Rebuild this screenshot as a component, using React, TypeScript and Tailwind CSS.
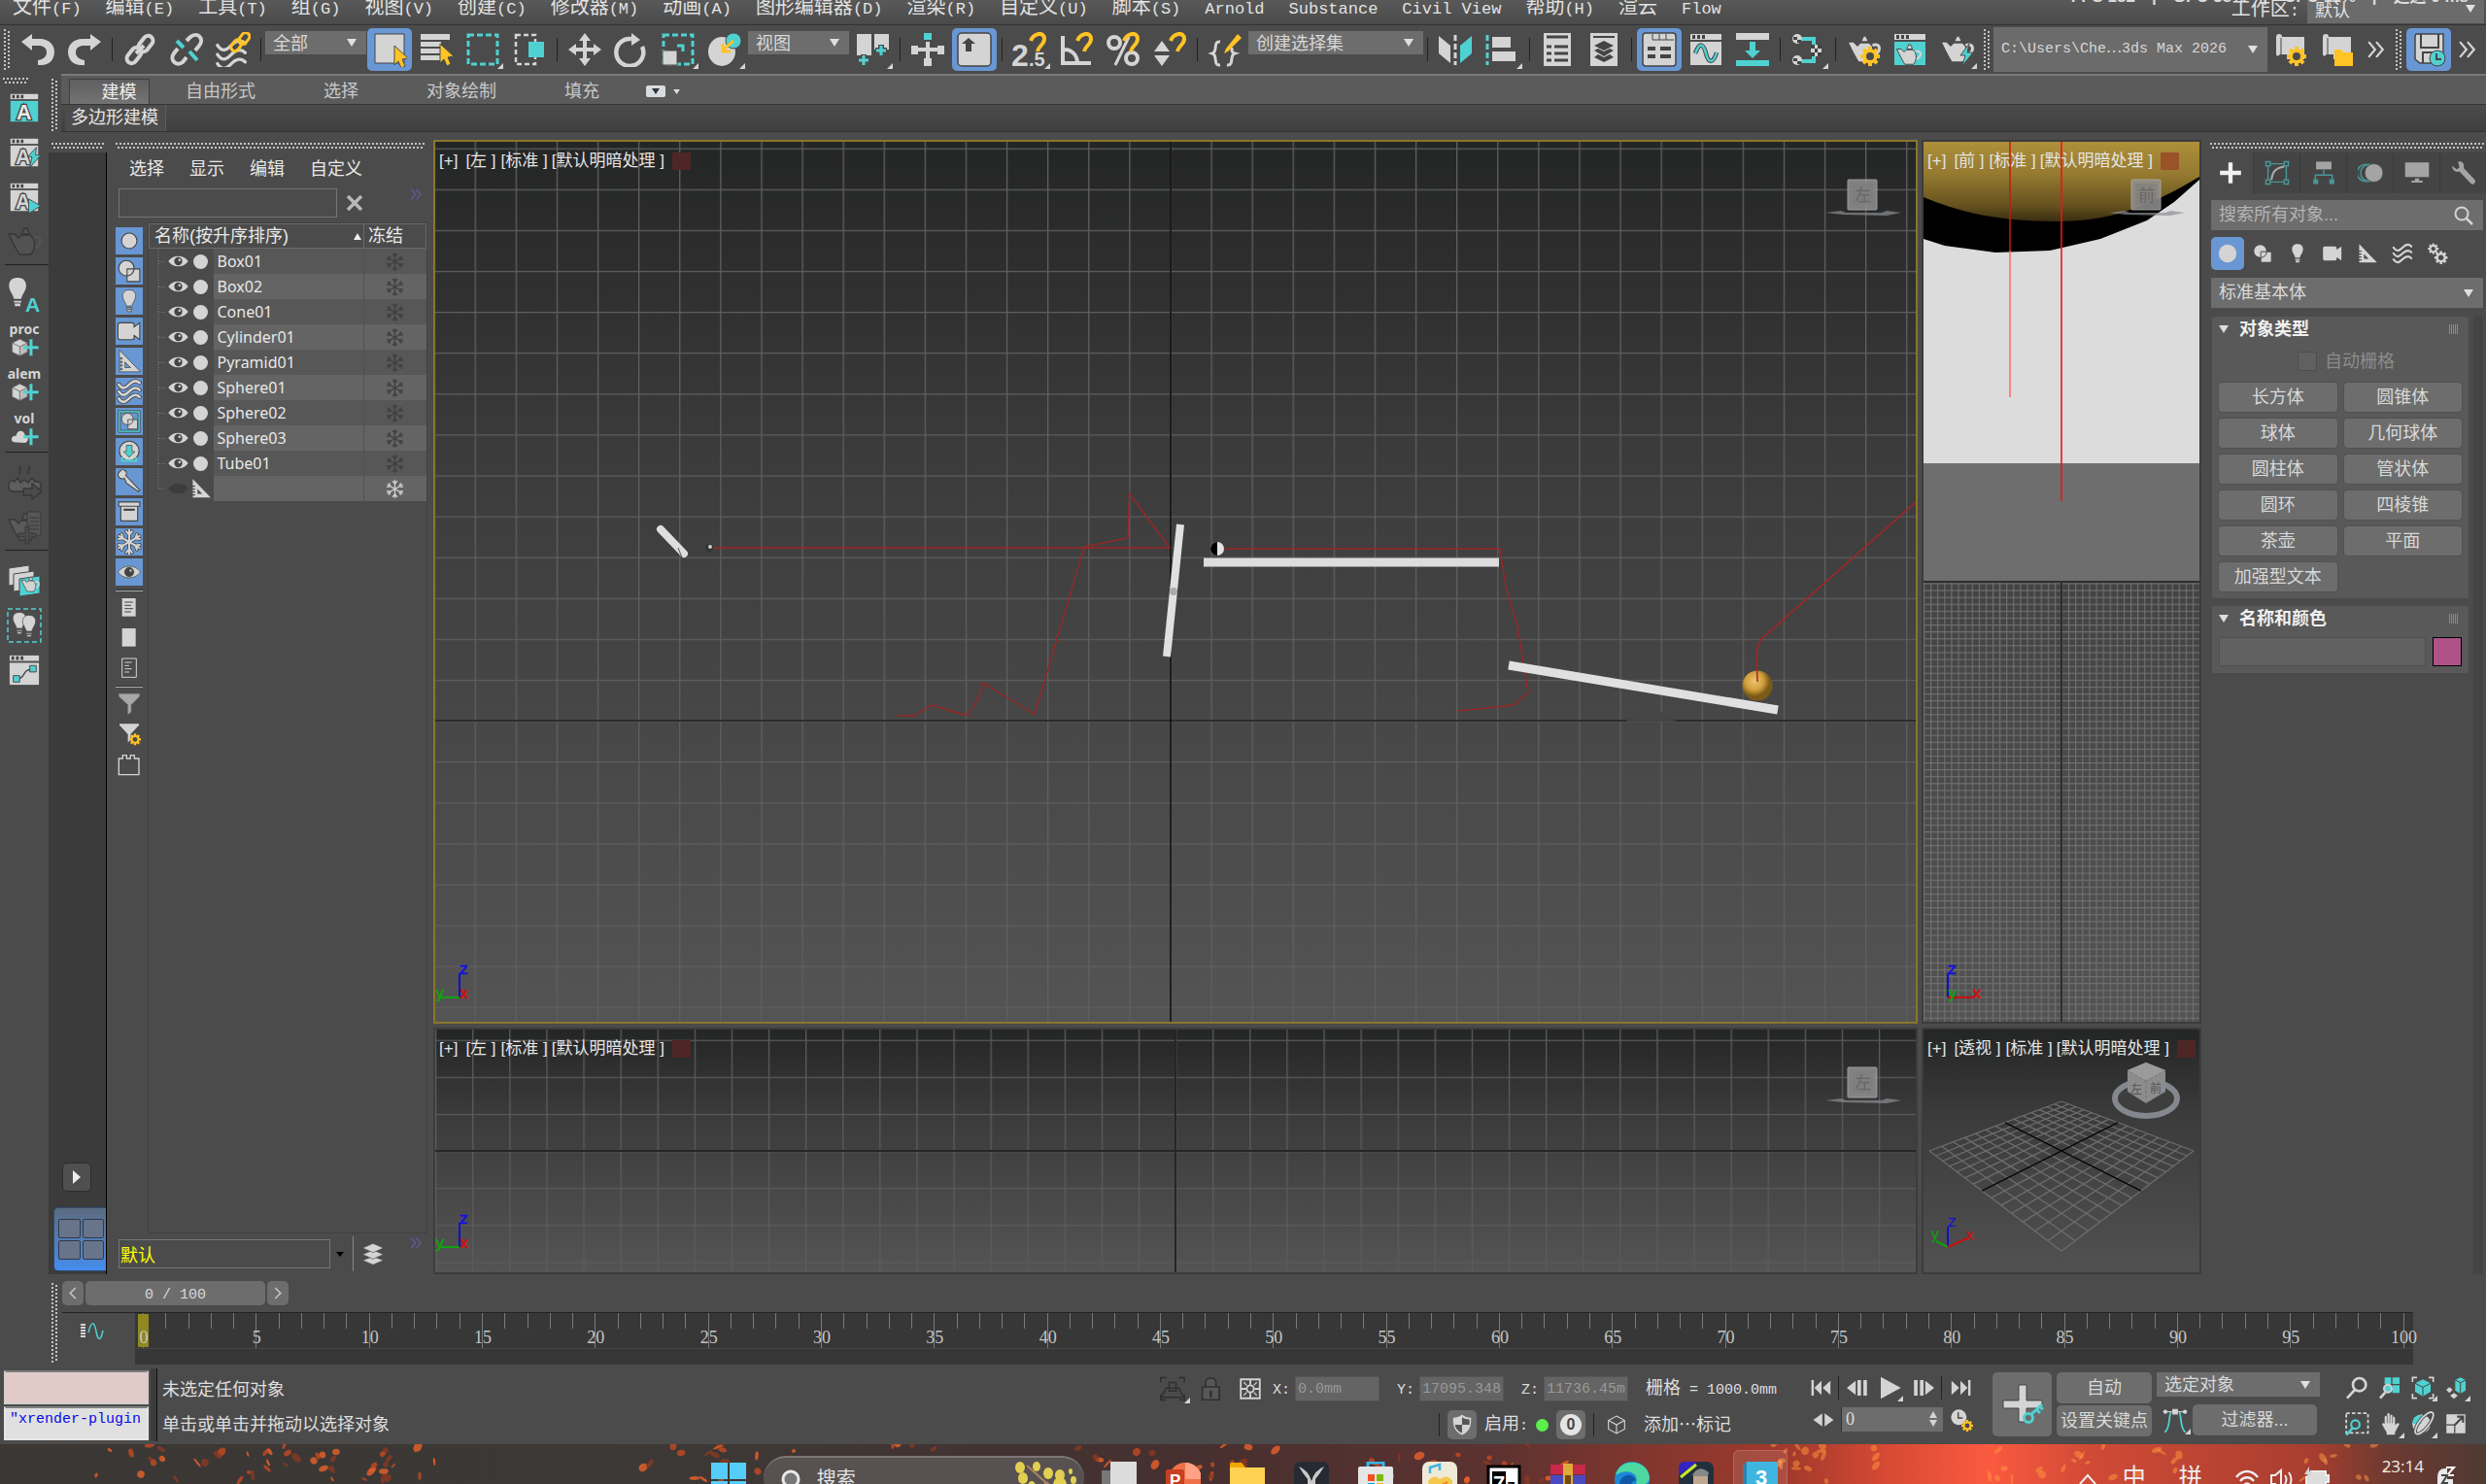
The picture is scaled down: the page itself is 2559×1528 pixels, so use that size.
import React, { useState } from "react";
import clsx from "clsx";

const L = "#d4d4d4";
const C = "#50d1d1";
const Y = "#ffc325";
const D = "#444444";

const MENUS = ["文件(F)", "编辑(E)", "工具(T)", "组(G)", "视图(V)", "创建(C)", "修改器(M)", "动画(A)", "图形编辑器(D)", "渲染(R)", "自定义(U)", "脚本(S)", "Arnold", "Substance", "Civil View", "帮助(H)", "渲云", "Flow"];
const OBJECTS = ["Box01", "Box02", "Cone01", "Cylinder01", "Pyramid01", "Sphere01", "Sphere02", "Sphere03", "Tube01"];
const PRIMITIVES = ["长方体", "圆锥体", "球体", "几何球体", "圆柱体", "管状体", "圆环", "四棱锥", "茶壶", "平面", "加强型文本"];

// Chinese at full size, latin in a half-width mono so that columns stay even
function Txt({ children, big }: { children: string; big?: boolean }) {
  const parts = children.split(/([\x20-\x7e]+)/).filter(Boolean);
  return (
    <span className={clsx("whitespace-pre", big ? "text-[20px]" : "text-[18px]")}>
      {parts.map((p, i) =>
        /^[\x20-\x7e]+$/.test(p) ? (
          <span key={i} className={clsx("font-['Liberation_Mono',monospace]", big ? "text-[17px]" : "text-[15px]")}>{p}</span>
        ) : (
          <React.Fragment key={i}>{p}</React.Fragment>
        )
      )}
    </span>
  );
}

type SvgProps = { children: React.ReactNode; className?: string; box?: string };
const Ico = ({ children, className = "h-9 w-9", box = "0 0 36 36" }: SvgProps) => (
  <svg viewBox={box} className={clsx("shrink-0", className)} fill={L} aria-hidden="true">{children}</svg>
);

const GripH = ({ className }: { className?: string }) => (
  <div className={clsx("flex flex-col gap-[2px]", className)}>
    <div className="h-[2px] bg-[repeating-linear-gradient(90deg,#c4c4c4_0_2px,transparent_2px_4px)]" />
    <div className="ml-[2px] h-[2px] bg-[repeating-linear-gradient(90deg,#c4c4c4_0_2px,transparent_2px_4px)]" />
  </div>
);
const GripV = ({ className }: { className?: string }) => (
  <div className={clsx("flex gap-[2px]", className)}>
    <div className="w-[2px] bg-[repeating-linear-gradient(180deg,#c4c4c4_0_2px,transparent_2px_4px)]" />
    <div className="mt-[2px] w-[2px] bg-[repeating-linear-gradient(180deg,#c4c4c4_0_2px,transparent_2px_4px)]" />
  </div>
);

const Sep = () => <div className="flex w-[9px] shrink-0 justify-center"><div className="h-6 w-px bg-[#222]" /></div>;

const Fly = () => (
  <svg viewBox="0 0 6 6" className="absolute right-[2px] bottom-[2px] h-[6px] w-[6px]"><path d="M6 0V6H0z" fill={L} /></svg>
);

function Tool({ label, on, fly, children }: { label: string; on?: boolean; fly?: boolean; children: React.ReactNode }) {
  return (
    <button aria-label={label} className={clsx("relative mx-px flex h-11 w-[46px] shrink-0 items-center justify-center rounded-[5px]", on && "bg-[#6897d3]")}>
      {children}
      {fly && <Fly />}
    </button>
  );
}

function Combo({ label, value, className }: { label: string; value: string; className?: string }) {
  return (
    <div className={clsx("relative shrink-0 bg-[#6d6d6d] text-[#d8d8d8]", className)}>
      <select aria-label={label} className="h-full w-full appearance-none bg-transparent pl-2 text-[18px] outline-none">
        <option>{value}</option>
      </select>
      <svg viewBox="0 0 10 8" className="pointer-events-none absolute top-1/2 right-[10px] h-2 w-[10px] -translate-y-1/2"><path d="M0 0H10L5 8z" fill="#e0e0e0" /></svg>
    </div>
  );
}

/* ---- drawings shared by several bars ---- */

const Cursor = ({ x = 20, y = 13 }) => <path d="M0 0L14 13L8 14L11 21L7 23L4 16L0 20z" transform={`translate(${x} ${y})`} fill={Y} stroke="#4b4b4b" strokeWidth="1" />;
const Magnet = () => <path d="M19 9C22 1 33 -1 33 7C33 13 27 14 26 20" fill="none" stroke={Y} strokeWidth="4" />;
const Pot = ({ fill = L, edge = D }) => (
  <g fill={fill} stroke={edge} strokeWidth="1.3">
    <path d="M27 14C37 9 37 23 27 24" fill="none" stroke={fill} strokeWidth="3" />
    <path d="M2 10L8 10L12 14L15 11H24L27 14C30 21 28 27 25 31H13C10 26 6 19 2 10z" />
    <path d="M16 10C16 6 18 7 18 4H21C21 7 23 6 23 10z" />
  </g>
);
const Gear = ({ x, y, s = 1, fill = Y, hole = "#4b4b4b" }: { x: number; y: number; s?: number; fill?: string; hole?: string }) => (
  <g transform={`translate(${x} ${y}) scale(${s})`}>
    {[0, 45, 90, 135].map((a) => <rect key={a} x="-2" y="-10" width="4" height="20" fill={fill} transform={`rotate(${a})`} />)}
    <circle r="7.5" fill={fill} />
    <circle r="4" fill={hole} />
  </g>
);
const Win = ({ body = L }) => (
  <>
    <path d="M2 2H34V8H2z" />
    <path d="M4 3H7V7H4zM9 3H12V7H9zM14 3H17V7H14z" fill={D} />
    <path d="M2 10H34V34H2z" fill={body} />
  </>
);
const Bulb = ({ edge = "none" }) => (
  <g stroke={edge}>
    <path d="M18 2C10 2 8 8 9 13C10 18 13 20 14 25H22C23 20 26 18 27 13C28 8 26 2 18 2z" />
    <path d="M14 27H22V29H14zM15 30H21V33H15z" />
  </g>
);
const Ruler = ({ edge = "none" }) => <path fillRule="evenodd" stroke={edge} d="M4 2L34 33H4V30H8V28H4V25H8V23H4V20H8V18H4V15H8V13H4zM12 19V27H20z" />;
const Waves = ({ edge = "none" }) => (
  <g fill="none" strokeLinecap="round">
    {[8, 18, 28].map((y) => (
      <g key={y}>
        <path d={`M3 ${y}C9 ${y + 9} 14 ${y + 4} 18 ${y}S28 ${y - 7} 33 ${y - 2}`} stroke={edge} strokeWidth="6" />
        <path d={`M3 ${y}C9 ${y + 9} 14 ${y + 4} 18 ${y}S28 ${y - 7} 33 ${y - 2}`} stroke={L} strokeWidth="3.5" />
      </g>
    ))}
  </g>
);
const Shapes = () => (
  <g stroke={D} strokeWidth="1.5"><circle cx="14" cy="14" r="11" /><path d="M15 15H33V33H15z" /><path d="M25 15A11 11 0 0 1 15 25" fill="none" /></g>
);
const Camera = ({ edge = "none" }) => <path stroke={edge} strokeWidth="1.5" d="M5 6H22Q25 6 25 9V12L33 6V30L25 24V27Q25 30 22 30H5Q2 30 2 27V9Q2 6 5 6z" />;
const Eye = ({ fill = L }) => (
  <><path d="M2 18C9 7 27 7 34 18C27 29 9 29 2 18z" fill={fill} /><circle cx="18" cy="18" r="6.5" fill={fill === L ? D : fill} /><circle cx="20" cy="16" r="2" fill={fill} /></>
);
const Snow = ({ color = L, width = 2.4 }) => (
  <g fill="none" stroke={color} strokeWidth={width} strokeLinecap="round">
    {[0, 60, 120, 180, 240, 300].map((a) => <path key={a} d="M18 18V1M14 3L18 8L22 3" transform={`rotate(${a} 18 18)`} />)}
  </g>
);
const Chain = () => (
  <g fill="none" stroke={L} strokeWidth="4">
    <rect x="-5" y="-9" width="10" height="18" rx="5" transform="translate(12 24) rotate(38)" />
    <rect x="-5" y="-9" width="10" height="18" rx="5" transform="translate(24 12) rotate(38)" />
    <path d="M14 22L22 14" />
  </g>
);
const Stack = ({ fill = L }) => (
  <g fill={fill} stroke="#4b4b4b" strokeWidth="1"><path d="M18 22L34 28L18 35L2 28z" /><path d="M18 12L34 19L18 26L2 19z" /><path d="M18 2L34 9L18 16L2 9z" /></g>
);
const Boxy = () => (
  <g stroke="#777" strokeWidth="1"><path d="M2 13L12 8L22 13L12 18z" /><path d="M2 13L12 18V30L2 25z" /><path d="M22 13L12 18V30L22 25z" fill="#bdbdbd" /></g>
);
const Chevrons = ({ color = L, className = "h-4 w-4" }) => (
  <Ico box="0 0 16 16" className={className}><path d="M1 1L7 8L1 15M8 1L14 8L8 15" fill="none" stroke={color} strokeWidth="2" /></Ico>
);

function MenuBar() {
  return (
    <nav className="relative flex h-[26px] shrink-0 overflow-hidden border-b border-[#333] bg-linear-to-b from-[#595959] to-[#4a4a4a] text-[#e2e2e2]">
      {MENUS.map((m) => (
        <button key={m} className="h-[14px] shrink-0 pr-3 pl-[13px] leading-[14px]"><Txt big>{m}</Txt></button>
      ))}
      <label className="mr-2 ml-auto h-[18px] leading-[18px]" htmlFor="workspace"><Txt big>工作区:</Txt></label>
      <div className="relative mr-[2px] h-6 w-[182px] bg-[#6b6b6b]">
        <select id="workspace" className="-mt-1 h-6 w-full appearance-none bg-transparent pl-2 text-[18px] outline-none"><option>默认</option></select>
        <svg viewBox="0 0 10 8" className="pointer-events-none absolute top-[5px] right-[9px] h-2 w-[10px]"><path d="M0 0H10L5 8z" fill="#e0e0e0" /></svg>
      </div>
      <div className="absolute -top-[13px] right-[18px] flex h-5 gap-[17px] text-[17px] leading-5 font-bold text-[#ddd]">
        <span>FPS 182</span><span>|</span><span>GPU 38%</span><span>|</span><span>CPU 11%</span><span>|</span><span>延迟 0 ms</span>
      </div>
    </nav>
  );
}

function MainToolbar() {
  return (
    <div className="flex h-[50px] shrink-0 items-center overflow-hidden">
      <GripV className="mr-[5px] ml-1 h-[42px]" />
      <Tool label="撤消"><Ico><path d="M1 10L12 2V7H20C30 7 35 14 35 20C35 29 29 34 22 34H18V29C24 28 27 25 27 21C27 16 23 14 19 14H12V19z" /></Ico></Tool>
      <Tool label="重做"><Ico><path d="M35 10L24 2V7H16C6 7 1 14 1 20C1 29 7 34 14 34H18V29C12 28 9 25 9 21C9 16 13 14 17 14H24V19z" /></Ico></Tool>
      <Sep />
      <Tool label="链接"><Ico><Chain /></Ico></Tool>
      <Tool label="断开链接">
        <Ico><g fill="none" stroke={L} strokeWidth="4"><path d="M9 17L5 22C0 29 8 36 14 31L18 26" /><path d="M18 9L22 5C29 -1 37 7 31 14L27 19" /></g><path d="M8 9L15 16M21 20L29 29" stroke={C} strokeWidth="4" /></Ico>
      </Tool>
      <Tool label="绑定到空间扭曲">
        <Ico><g transform="translate(-1 6) scale(.95)"><Waves edge="#4b4b4b" /></g><g fill="none" stroke={Y} strokeWidth="3"><rect x="-4" y="-7" width="8" height="13" rx="4" transform="translate(21 14) rotate(38)" /><rect x="-4" y="-7" width="8" height="13" rx="4" transform="translate(29 7) rotate(38)" /></g></Ico>
      </Tool>
      <Sep />
      <Combo label="选择过滤器" value="全部" className="mb-[14px] h-6 w-[104px]" />
      <Tool label="选择对象" on><Ico><path d="M3 2H33V32H3z" stroke={D} /><Cursor x={23} y={14} /></Ico></Tool>
      <Tool label="按名称选择"><Ico><path d="M2 2H32V8H2zM2 10H23V15H2zM2 17H23V22H2zM2 24H23V29H2z" /><Cursor x={22} y={12} /></Ico></Tool>
      <Tool label="矩形选择区域" fly><Ico><rect x="3" y="3" width="30" height="30" fill="none" stroke={C} strokeWidth="3" strokeDasharray="6 3" /></Ico></Tool>
      <Tool label="窗口/交叉"><Ico><rect x="4" y="3" width="20" height="30" fill="none" stroke={L} strokeWidth="2.5" strokeDasharray="5 3" /><path d="M17 10H33V26H17z" fill={C} /></Ico></Tool>
      <Sep />
      <Tool label="移动"><Ico><path d="M18 1L24 9H20V16H27V12L35 18L27 24V20H20V27H24L18 35L12 27H16V20H9V24L1 18L9 12V16H16V9H12z" /></Ico></Tool>
      <Tool label="旋转"><Ico><path d="M19 6A14 14 0 1 0 30 14" fill="none" stroke={L} strokeWidth="4.5" transform="translate(-1 1)" /><path d="M18 1L27 8L18 14z" /></Ico></Tool>
      <Tool label="缩放" fly><Ico><rect x="3" y="3" width="30" height="30" fill="none" stroke={C} strokeWidth="3" strokeDasharray="6 3" /><path d="M2 19H17V34H2z" stroke="#4b4b4b" /><path d="M17 14H23V20" fill="none" stroke={C} strokeWidth="3" /></Ico></Tool>
      <Tool label="放置" fly><Ico><ellipse cx="15" cy="20" rx="14" ry="15" /><circle cx="27" cy="9" r="8" fill={C} stroke="#4b4b4b" /><path d="M27 9L17 18M16 12V20H24" fill="none" stroke={Y} strokeWidth="3" /></Ico></Tool>
      <Combo label="参考坐标系" value="视图" className="mb-[14px] h-6 w-[104px]" />
      <Tool label="使用轴点中心" fly><Ico><path d="M2 2H17V24H2zM20 2H35V18H20z" /><path d="M9 23V35M3 29H15M27 13V25M21 19H33" stroke="#4b4b4b" strokeWidth="6" /><path d="M9 24V34M4 29H14M27 14V24M22 19H32" stroke={C} strokeWidth="3" /></Ico></Tool>
      <Sep />
      <Tool label="选择并操纵"><Ico><path d="M14 1H22V8H14z" fill={C} /><path d="M16 10H20V16H28V14H35V23H28V20H20V27H22V35H14V27H16V20H8V23H1V14H8V16H16z" /></Ico></Tool>
      <Tool label="键盘快捷键覆盖" on><Ico><rect x="1" y="1" width="34" height="34" rx="4" stroke={D} strokeWidth="1.5" /><path d="M12 6L19 12H15V20H9V12H5z" fill={D} /></Ico></Tool>
      <Sep />
      <Tool label="捕捉开关" fly><Ico><text x="-1" y="35" fontSize="32" fontWeight="bold" fontFamily="Liberation Sans">2</text><text x="17" y="35" fontSize="20" fontWeight="bold" fontFamily="Liberation Sans">.5</text><Magnet /></Ico></Tool>
      <Tool label="角度捕捉"><Ico><path d="M4 4V32H33M4 18C14 17 19 25 19 32" fill="none" stroke={L} strokeWidth="4" /><Magnet /></Ico></Tool>
      <Tool label="百分比捕捉"><Ico><circle cx="9" cy="11" r="6" fill="none" stroke={L} strokeWidth="4" /><circle cx="27" cy="27" r="6" fill="none" stroke={L} strokeWidth="4" /><path d="M24 5L10 34" stroke={L} strokeWidth="3" /><Magnet /></Ico></Tool>
      <Tool label="微调器捕捉"><Ico><path d="M2 20L10 9L18 20zM2 24H18L10 35z" /><Magnet /></Ico></Tool>
      <Sep />
      <Tool label="编辑命名选择集"><Ico><path d="M13 10C5 9 11 20 5 22C11 24 5 35 13 34M20 34C28 35 22 24 28 22C24 21 25 18 25 16" fill="none" stroke={L} strokeWidth="3" /><path d="M31 2L35 6L21 20L17 22L19 17z" fill={Y} /></Ico></Tool>
      <Combo label="命名选择集" value="创建选择集" className="mb-[14px] h-6 w-[180px]" />
      <Sep />
      <Tool label="镜像"><Ico><path d="M1 4L13 14V32L1 22z" /><path d="M35 4L23 14V32L35 22z" fill={C} /><path d="M18 3V34" stroke={L} strokeWidth="3" strokeDasharray="6 3" /></Ico></Tool>
      <Tool label="对齐" fly><Ico><path d="M3 3V34" stroke={C} strokeWidth="3" strokeDasharray="6 3" /><path d="M8 5H27V16H8zM8 20H32V30H8z" /></Ico></Tool>
      <Sep />
      <Tool label="场景资源管理器"><Ico><path d="M4 1H32V35H4z" /><path d="M7 5H29M7 15H12M15 15H29M7 22H12M15 22H29M7 29H12M15 29H29" stroke={D} strokeWidth="3" /></Ico></Tool>
      <Tool label="层资源管理器"><Ico><path d="M4 1H32V35H4z" /><path d="M7 5H29" stroke={D} strokeWidth="2" /><path d="M18 9L28 14L18 19L8 14z" fill={D} /><path d="M8 19L12 17L18 20L24 17L28 19L18 25zM8 26L12 23L18 26L24 23L28 26L18 31z" fill={D} /></Ico></Tool>
      <Sep />
      <Tool label="功能区" on><Ico><rect x="1" y="1" width="34" height="34" rx="3" stroke={D} strokeWidth="1.5" /><path d="M11 2V8H33M18 2V8M25 2V8" fill="none" stroke={D} /><path d="M6 17H14M19 17H30M6 25H14M19 25H30" stroke={D} strokeWidth="4" /></Ico></Tool>
      <Tool label="曲线编辑器"><Ico><Win /><path d="M7 22C12 8 16 14 18 22S25 35 29 21" fill="none" stroke={D} strokeWidth="4.5" /><path d="M7 22C12 8 16 14 18 22S25 35 29 21" fill="none" stroke={C} strokeWidth="2.5" /></Ico></Tool>
      <Tool label="图解视图"><Ico><path d="M1 1H35V8H1z" /><path d="M1 29H35V35H1zM15 10H21V19H26L18 27L10 19H15z" fill={C} /></Ico></Tool>
      <Sep />
      <Tool label="材质编辑器" fly><Ico><path d="M12 7H24V13M12 30H24V24" fill="none" stroke={C} strokeWidth="4" /><circle cx="7" cy="7" r="5" /><circle cx="7" cy="29" r="5" /><path d="M21 13H32V25H21z" /><path d="M21 13H25V17H21zM28 13H32V17H28zM25 17H28V21H25zM21 21H25V25H21zM28 21H32V25H28zM3 5H7V8H3zM7 8H11V11H7zM3 27H7V30H3zM7 30H11V33H7z" fill={D} /></Ico></Tool>
      <Sep />
      <Tool label="渲染设置"><Ico><Pot edge="#4b4b4b" /><Gear x={25} y={25} /></Ico></Tool>
      <Tool label="渲染帧窗口"><Ico><Win body={C} /><g transform="translate(3 10) scale(.75)"><Pot /></g></Ico></Tool>
      <Tool label="渲染产品" fly><Ico><Pot edge="#4b4b4b" /><path d="M31 12L22 24H27L24 35L35 21H29z" fill={C} stroke="#4b4b4b" /></Ico></Tool>
      <GripV className="mx-1 h-[42px]" />
      <div className="relative h-[46px] w-[282px] shrink-0 bg-[#6b6b6b] text-[#d8d8d8]">
        <select aria-label="项目路径" className="h-full w-full appearance-none bg-transparent pl-2 font-['Liberation_Mono','Noto_Sans_CJK_SC',monospace] text-[15px] outline-none"><option>C:\Users\Che⋯3ds Max 2026</option></select>
        <svg viewBox="0 0 10 8" className="pointer-events-none absolute top-[19px] right-[10px] h-2 w-[10px]"><path d="M0 0H10L5 8z" fill="#e0e0e0" /></svg>
      </div>
      <Tool label="项目设置"><Ico><path d="M9 5H32V28H14V23H7Q3 27 3 22V5Q3 2 6 2Q9 2 9 5z" /><path d="M8 6V23" stroke={D} /><Gear x={24} y={25} /></Ico></Tool>
      <Tool label="项目文件夹"><Ico><path d="M9 5H32V28H14V23H7Q3 27 3 22V5Q3 2 6 2Q9 2 9 5z" /><path d="M8 6V23" stroke={D} /><path d="M15 18H22L24 21H34V35H15z" fill={Y} /></Ico></Tool>
      <button aria-label="更多" className="flex w-8 shrink-0 justify-center"><Chevrons className="h-[18px] w-[18px]" /></button>
      <GripV className="mx-1 h-[42px]" />
      <Tool label="自动保存" on><Ico><path d="M5 2H33V32H9L4 28V4z" stroke={D} strokeWidth="1.5" /><path d="M10 2V16H28V2M12 32V21H26" fill="none" stroke={D} strokeWidth="2" /><circle cx="27" cy="27" r="8" fill={C} stroke={D} /><path d="M26 22V28H31" fill="none" stroke={D} strokeWidth="2" /></Ico></Tool>
      <button aria-label="更多" className="flex w-8 shrink-0 justify-center"><Chevrons className="h-[18px] w-[18px]" /></button>
    </div>
  );
}

const SideSep = () => <div className="flex h-[9px] flex-col pl-[5px]"><div className="h-px bg-[#222]" /></div>;
const Side = ({ label, children }: { label: string; children: React.ReactNode }) => (
  <button aria-label={label} className="flex h-[46px] w-full flex-col items-center justify-center">{children}</button>
);
const LetterA = ({ x = 9, y = 31, size = 24, fill = L, edge = D }) => (
  <text x={x} y={y} fontSize={size} fontWeight="bold" fontFamily="Liberation Sans" fill={fill} stroke={edge} strokeWidth="3" paintOrder="stroke">A</text>
);
const AddBox = ({ word, cloud }: { word: string; cloud?: boolean }) => (
  <>
    <span className="h-[14px] font-['Noto_Sans',sans-serif] text-[14px] leading-[12px] font-bold text-[#d4d4d4]">{word}</span>
    <Ico box="0 5 36 26" className="h-[20px] w-[34px]">
      {cloud ? <path d="M4 26C-2 24 2 16 7 18C8 9 18 9 19 17C25 18 24 27 18 27z" /> : <Boxy />}
      <path d="M27 8V30M17 19H37" stroke={C} strokeWidth="4" />
    </Ico>
  </>
);

function LeftBar() {
  return (
    <aside className="w-[50px] shrink-0 pt-1">
      <GripH className="mb-[2px] ml-[3px] w-[26px]" />
      <Side label="Arnold 渲染视图"><Ico className="h-8 w-8"><Win body={C} /><LetterA fill="#e8e8e8" /></Ico></Side>
      <Side label="Arnold 快速渲染"><Ico className="h-8 w-8"><Win /><LetterA x={8} /><path d="M32 12L22 23H27L24 36L37 21H31z" fill={C} stroke={D} /></Ico></Side>
      <Side label="Arnold 播放"><Ico className="h-8 w-8"><Win /><LetterA x={8} /><path d="M23 20L37 28L23 37z" fill={C} stroke={D} /></Ico></Side>
      <Side label="茶壶"><Ico><Pot fill="#525252" edge="#363636" /></Ico></Side>
      <SideSep />
      <Side label="Arnold 灯光"><Ico><g transform="translate(-6 -2) scale(.95)"><Bulb /></g><LetterA x={19} y={35} size={21} fill={C} edge="#4b4b4b" /></Ico></Side>
      <Side label="proc"><AddBox word="proc" /></Side>
      <Side label="alem"><AddBox word="alem" /></Side>
      <Side label="vol"><AddBox word="vol" cloud /></Side>
      <SideSep />
      <Side label="烘焙"><Ico><path d="M2 22C1 17 6 14 8 17L11 13L14 18L18 15L22 18L26 13L29 17C35 15 37 22 32 27H7C3 27 2 25 2 22z" fill="#5e5e5e" stroke="#383838" strokeWidth="1.5" /><path d="M14 9C11 6 16 4 13 1M23 9C20 6 25 4 22 1" fill="none" stroke="#3a3a3a" strokeWidth="2" /><path d="M17 24H26V19L36 27L26 35V31H17z" fill="#4b4b4b" stroke="#383838" strokeWidth="1.5" /></Ico></Side>
      <Side label="添加渲染"><Ico><Pot fill="#5a5a5a" edge="#383838" /><path d="M21 2H35V26H21z" fill="#565656" stroke="#383838" /><path d="M24 8H33M24 12H33M24 16H33M24 20H33" stroke="#383838" /><path d="M19 17H23V24H30V28H23V35H19V28H12V24H19z" fill="#4b4b4b" stroke="#383838" /></Ico></Side>
      <SideSep />
      <Side label="批处理渲染"><Ico><g stroke="#4b4b4b"><path d="M2 5L23 2V20L2 23z" /><path d="M7 11L28 8V26L7 29z" /><path d="M13 16L34 13V31L13 34z" fill={C} /></g><g transform="translate(14 12) scale(.55)"><Pot /></g></Ico></Side>
      <Side label="灯光列表"><Ico><rect x="1" y="1" width="34" height="34" fill="none" stroke={C} strokeWidth="1.5" strokeDasharray="5 3" /><g transform="translate(0 3) scale(.72)"><Bulb edge="#4b4b4b" /></g><g transform="translate(10 6) scale(.72)"><Bulb edge="#4b4b4b" /></g></Ico></Side>
      <Side label="粒子视图"><Ico className="h-[34px] w-[34px]"><Win /><path d="M10 28C20 27 15 17 27 17" fill="none" stroke={D} strokeWidth="1.5" /><path d="M6 24H13V31H6zM24 13H31V20H24z" fill={C} stroke={D} /></Ico></Side>
    </aside>
  );
}

function Ribbon() {
  const tabs = ["自由形式", "选择", "对象绘制", "填充"];
  return (
    <div className="flex h-[60px] shrink-0">
      <GripV className="mt-[5px] mr-[4px] ml-[3px] h-[54px]" />
      <div className="min-w-0 flex-1">
        <div className="flex h-[31px] items-end gap-[70px] border-t-2 border-[#797979] bg-[#5b5b5b] pl-2 text-[18px] leading-6 text-[#c8c8c8]">
          <button className="h-[26px] w-[83px] border border-b-0 border-[#3f3f3f] bg-linear-to-b from-[#5f5f5f] to-[#747474] pl-5 text-[#eee]">建模</button>
          {tabs.map((t, i) => (
            <button key={t} className={clsx("h-[26px]", i === 0 && "-ml-[33px]")}>{t}</button>
          ))}
          <button aria-label="功能区选项" className="-ml-[22px] flex h-[26px] items-center gap-2">
            <svg viewBox="0 0 20 12" className="h-3 w-5"><rect width="20" height="12" rx="2" fill="#d8dde2" /><path d="M6 3H14L10 9z" fill="#333" /></svg>
            <svg viewBox="0 0 8 6" className="h-[5px] w-[7px]"><path d="M0 0H8L4 6z" fill="#ddd" /></svg>
          </button>
        </div>
        <div className="h-[29px] border-y border-[#343434] bg-linear-to-b from-[#4c4c4c] to-[#3f3f3f] pl-1">
          <button className="h-[27px] w-[104px] border-r border-[#5e5e5e] bg-[#4c4c4c] pl-[6px] text-left text-[18px] leading-[27px] text-[#e6e6e6]">多边形建模</button>
        </div>
      </div>
    </div>
  );
}

function Dock() {
  return (
    <div className="flex w-[60px] shrink-0 flex-col pt-[11px]">
      <GripH className="mb-1 ml-[3px] w-[54px]" />
      <div className="flex flex-1 flex-col justify-end gap-4 overflow-hidden border-r border-black bg-[#3b3b3b] pb-[3px] pl-[5px]">
        <button aria-label="播放视口布局" className="ml-[9px] flex h-[30px] w-[30px] items-center justify-center rounded-[5px] border border-[#2c2c2c] bg-[#4f4f4f]">
          <svg viewBox="0 0 8 14" className="h-[14px] w-2"><path d="M0 0L8 7L0 14z" fill="#eee" /></svg>
        </button>
        <button aria-label="四视图" className="grid h-[66px] w-[54px] shrink-0 grid-cols-2 content-center gap-[2px] rounded-l-[5px] border border-r-0 border-[#2d4a70] bg-linear-to-b from-[#5b6b80] to-[#448cec] pr-[2px] pl-1">
          {[0, 1, 2, 3].map((i) => <span key={i} className="h-5 rounded-[2px] border border-[#2e3a4a] bg-[#68748a]" />)}
        </button>
      </div>
    </div>
  );
}

function Filters() {
  const items: [string, React.ReactNode][] = [
    ["几何体", <circle cx="18" cy="18" r="11" stroke={D} strokeWidth="1.5" />],
    ["图形", <Shapes />],
    ["灯光", <Bulb edge={D} />],
    ["摄影机", <Camera edge={D} />],
    ["辅助对象", <Ruler edge={D} />],
    ["空间扭曲", <Waves edge={D} />],
    ["组", <><rect x="4" y="4" width="28" height="28" fill="#6897d3" stroke={D} strokeWidth="4" /><rect x="4" y="4" width="28" height="28" fill="none" stroke={C} strokeWidth="2" /><g transform="translate(5 4) scale(.75)"><Shapes /></g></>],
    ["外部参照", <><circle cx="18" cy="17" r="14" stroke={D} strokeWidth="1.5" /><path d="M14 9H22V18H26L18 26L10 18H14z" fill={C} stroke={D} /><path d="M8 26V31H28V26" fill="none" stroke={C} strokeWidth="3" /></>],
    ["骨骼", <path d="M5 3A5 5 0 0 1 13 9L33 30L31 32L14 20L11 13A5 5 0 0 1 5 3z" stroke={D} strokeWidth="1.5" />],
    ["容器", <><path d="M3 4H33V10H3zM6 10H30V31H6z" stroke={D} strokeWidth="1.5" /><path d="M10 15H26" stroke={D} strokeWidth="3" /></>],
    ["冻结", <><Snow color={D} width={5} /><Snow width={2.8} /></>],
    ["隐藏", <g stroke={D} strokeWidth="1"><Eye /></g>],
  ];
  const plain: [string, React.ReactNode][] = [
    ["全部显示", <><path d="M7 3H28V31H7z" /><path d="M11 9H24M11 14H21M11 19H24M11 24H21" stroke={D} strokeWidth="1.5" /></>],
    ["全部不显示", <path d="M7 3H28V31H7z" />],
    ["反转显示", <><path d="M7 3H29V32H7z" fill="none" stroke={L} strokeWidth="1.5" /><path d="M11 9H22M11 14H18M11 19H22M11 24H18" stroke={L} strokeWidth="1.5" /></>],
  ];
  return (
    <div className="flex w-7 shrink-0 flex-col gap-[3px] pt-[5px]">
      {items.map(([name, art]) => (
        <button key={name} aria-label={name} className="flex h-7 w-7 items-center justify-center bg-[#6897d3]"><Ico className="h-[26px] w-[26px]">{art}</Ico></button>
      ))}
      <div className="mt-px h-[2px] border-b border-[#aaa] bg-[#333]" />
      {plain.map(([name, art]) => (
        <button key={name} aria-label={name} className="flex h-7 items-center justify-center"><Ico className="h-6 w-6">{art}</Ico></button>
      ))}
      <div className="mt-px h-[2px] border-b border-[#aaa] bg-[#333]" />
      <button aria-label="过滤" className="flex h-7 items-center justify-center"><Ico className="h-6 w-6"><path d="M2 2H34V6L21 19V30L16 34V19L2 6z" fill="#a8a8a8" stroke="#777" /></Ico></button>
      <button aria-label="配置过滤" className="flex h-7 items-center justify-center"><Ico className="h-6 w-6"><path d="M3 2H33V4L20 18V26L16 31V18L3 4z" /><Gear x={27} y={26} s={0.9} /></Ico></button>
      <button aria-label="容器" className="flex h-7 items-center justify-center"><Ico className="h-6 w-6"><path d="M2 34V9H8V4H14V9H20V4H26V9H33V34z" fill="none" stroke={L} strokeWidth="2" /></Ico></button>
    </div>
  );
}

function Explorer() {
  const [query, setQuery] = useState("");
  return (
    <section className="flex w-[336px] shrink-0 flex-col pt-[11px] pr-[6px] pl-[9px] text-[#e8e8e8]">
      <GripH className="w-[318px]" />
      <nav className="mt-[5px] ml-[14px] flex h-[32px] items-center gap-[26px] text-[18px]">
        {["选择", "显示", "编辑", "自定义"].map((t) => <button key={t}>{t}</button>)}
      </nav>
      <div className="mt-1 mb-[5px] ml-[3px] flex">
        <input aria-label="查找" value={query} onChange={(e) => setQuery(e.target.value)} className="h-[30px] w-[225px] border border-[#757575] bg-transparent px-2 text-[16px] outline-none" />
        <button aria-label="清除" className="flex w-9 items-center justify-center"><Ico box="0 0 16 16" className="h-4 w-4"><path d="M1 1L15 15M15 1L1 15" stroke="#b8b8b8" strokeWidth="3.5" /></Ico></button>
        <button aria-label="展开" className="mr-[5px] ml-auto self-start"><Chevrons color="#5a5a9a" className="h-3 w-[13px]" /></button>
      </div>
      <div className="flex min-h-0 flex-1 gap-[5px]">
        <Filters />
        <div className="flex-1 border border-[#414141]">
          <table className="w-full table-fixed border-collapse">
            <colgroup><col className="w-[66px]" /><col /><col className="w-16" /></colgroup>
            <thead>
              <tr className="h-[25px] border border-[#6a6a6a] text-left text-[18px] leading-[22px]">
                <th colSpan={2} className="border-r border-[#6a6a6a] p-0 pl-[5px] font-normal">
                  <div className="flex items-center justify-between pr-[2px] whitespace-nowrap">名称(按升序排序)<svg viewBox="0 0 8 7" className="h-[7px] w-2"><path d="M4 0L8 7H0z" fill="#eee" /></svg></div>
                </th>
                <th className="p-0 pl-1 font-normal">冻结</th>
              </tr>
            </thead>
            <tbody>
              {[...OBJECTS, ""].map((name, i) => (
                <tr key={name} className="h-[26px]">
                  <td className="p-0">
                    <div className="flex h-[26px] items-center">
                      <svg viewBox="0 0 19 26" className="h-[26px] w-[18px]"><path d={name ? "M9.5 0V26M9.5 13.5H17" : "M9.5 0V13.5H17"} fill="none" stroke="#8a8a8a" strokeDasharray="1 2" /></svg>
                      <Ico box="0 4 36 28" className="h-[18px] w-[23px]"><Eye fill={name ? L : "#3d3d3d"} /></Ico>
                      {name ? <span className="ml-1 h-[15px] w-[15px] rounded-full bg-[#d4d4d4]" /> : <Ico className="h-[22px] w-6"><Ruler /></Ico>}
                    </div>
                  </td>
                  <td className={clsx("border-r border-[#4f4f4f] p-0 pl-1 font-['Noto_Sans',sans-serif] text-[16px] leading-[26px]", i % 2 ? "bg-[#646464]" : "bg-[#575757]")}>{name}</td>
                  <td className={clsx("p-0", i % 2 ? "bg-[#646464]" : "bg-[#575757]")}><Ico className="mx-auto h-[19px] w-[19px]"><Snow color={name ? "#3f3f3f" : L} /></Ico></td>
                </tr>
              ))}
            </tbody>
          </table>
        </div>
      </div>
      <div className="flex h-[42px] items-center pl-[3px]">
        <input aria-label="层" defaultValue="默认" className="h-[30px] w-[218px] border border-[#757575] bg-transparent px-px text-[18px] text-[#ff0] outline-none" />
        <svg viewBox="0 0 8 5" className="mr-[9px] ml-[6px] h-[5px] w-2"><path d="M0 0H8L4 5z" /></svg>
        <div className="h-9 w-px bg-[#888]" />
        <button aria-label="层管理" className="ml-2"><Ico className="h-[24px] w-[24px]"><Stack /></Ico></button>
        <button aria-label="展开" className="mt-1 mr-[5px] ml-auto self-start"><Chevrons color="#5a5a9a" className="h-3 w-[13px]" /></button>
      </div>
    </section>
  );
}

/* ---- viewports ---- */

function Label({ name, dim }: { name: string; dim?: string }) {
  return (
    <div className="absolute top-2 left-1 flex h-6 items-center gap-2 text-[17px] whitespace-nowrap text-[#e4e4e4]">
      <button>[+]</button>
      <button>[{name} ]</button>
      <button className="-ml-[3px]">[标准 ]</button>
      <button className="-ml-1">[默认明暗处理 ]</button>
      <span className={clsx("h-[18px] w-[19px]", dim || "bg-[#4e2626]")} />
    </div>
  );
}

const Fade = ({ id, to = "#545454" }: { id: string; to?: string }) => (
  <linearGradient id={id} x1="0" y1="0" x2="0" y2="1"><stop offset="0" stopColor="#242525" /><stop offset=".35" stopColor="#3b3b3b" /><stop offset="1" stopColor={to} /></linearGradient>
);

const Cube = ({ x, y, t }: { x: number; y: number; t: string }) => (
  <g transform={`translate(${x} ${y})`}>
    <path d="M-38 18L-22 16L-17 18H20L25 16L40 18L25 21L-20 20z" fill="#8b8f94" opacity=".7" />
    <rect x="-15" y="-16" width="30" height="31" rx="1" fill="#919191" stroke="#b0b0b0" opacity=".85" />
    <rect x="-11" y="-12" width="22" height="22" fill="#7b7b7b" opacity=".5" />
    <text x="-8" y="6" fontSize="17" fill="#666">{t}</text>
  </g>
);

const Axis = ({ x, y, flip }: { x: number; y: number; flip?: boolean }) => (
  <g transform={`translate(${x} ${y})`} fontSize="16" fontFamily="DejaVu Sans" strokeWidth="2">
    <path d="M0 0V-25" stroke="#1010c8" />
    {flip ? <path d="M0 0H26" stroke="#c81010" /> : <path d="M0 0H-20" stroke="#10a010" />}
    <text x="0" y="-24" fill="#1010e0" stroke="#1010e0" strokeWidth=".6">z</text>
    <text x={flip ? 0 : -25} y="1" fill="#10a010" stroke="#10a010" strokeWidth=".6">y</text>
    <text x={flip ? 25 : 0} y="1" fill="#d01010" stroke="#d01010" strokeWidth=".6">x</text>
  </g>
);

function LeftView() {
  return (
    <div className="relative overflow-hidden border-2 border-[#8a7629]">
      <svg viewBox="0 0 1524 906" preserveAspectRatio="xMidYMid slice" className="absolute inset-0 h-full w-full">
        <defs>
          <Fade id="fadeA" />
          <pattern id="gridA" width="42.1" height="42.1" patternUnits="userSpaceOnUse" x="756.3" y="596"><path d="M0 0H42.1M0 0V42.1" stroke="#5f5f5f" strokeWidth="2.6" fill="none" /></pattern>
          <radialGradient id="gold" cx=".4" cy=".35"><stop offset="0" stopColor="#ecc46a" /><stop offset=".6" stopColor="#d19f3c" /><stop offset="1" stopColor="#7a5a18" /></radialGradient>
        </defs>
        <rect width="1524" height="906" fill="url(#fadeA)" />
        <rect width="1524" height="906" fill="url(#gridA)" />
        <path d="M0 596H1524" stroke="#2c2c2c" strokeWidth="2" />
        <path d="M757 0V906" stroke="#060606" strokeWidth="1.4" />
        <path d="M1225 597L1242 586H1260L1278 597z" fill="#454545" />
        <g fill="none" stroke="#9c2626" strokeWidth="1.4">
          <path d="M283 418H756L714.500 362L713 408L668 417L617 589.500L564 557L559 573L548 590.500L537 588L511 580L493 591L475 590.600" />
          <path d="M804 419H1096L1102 458L1114 499L1125 567L1110 580L1053 586" />
        </g>
        <path d="M232 399L256 424" stroke="#dedede" strokeWidth="8" strokeLinecap="round" />
        <path d="M250 418L254 428" stroke="#555" />
        <circle cx="282" cy="418" r="4" fill="#333" /><circle cx="283" cy="417" r="2" fill="#ccc" />
        <path d="M767 394L753 530" stroke="#e0e0e0" strokeWidth="8" />
        <circle cx="760" cy="463" r="4" fill="#aaa" />
        <path d="M791 433H1095" stroke="#dcdcdc" strokeWidth="9" />
        <circle cx="805" cy="419" r="7" fill="#e4e4e4" /><path d="M805 412A7 7 0 0 0 805 426z" />
        <path d="M1105 539L1382 585" stroke="#e0e0e0" strokeWidth="9" />
        <circle cx="1361" cy="560" r="15.500" fill="url(#gold)" />
        <path d="M1524 371L1364 513L1360 526L1361 556" fill="none" stroke="#a82424" strokeWidth="1.500" />
        <Cube x={1469} y={55} t="左" />
        <Axis x={25} y={881} />
      </svg>
      <Label name="左" />
    </div>
  );
}

function LeftViewSmall() {
  return (
    <div className="relative overflow-hidden border-2 border-[#3c3c3c]">
      <svg viewBox="0 0 1524 250" preserveAspectRatio="xMidYMid slice" className="absolute inset-0 h-full w-full">
        <defs>
          <Fade id="fadeB" />
          <pattern id="gridB" width="38.1" height="38.1" patternUnits="userSpaceOnUse" x="762" y="125"><path d="M0 0H38.100M0 0V38.100" stroke="#5b5b5b" strokeWidth="2.600" fill="none" /></pattern>
        </defs>
        <rect width="1524" height="250" fill="url(#fadeB)" />
        <rect width="1524" height="250" fill="url(#gridB)" />
        <path d="M0 125H1524M762 0V250" stroke="#262626" strokeWidth="2" />
        <Cube x={1469} y={55} t="左" />
        <Axis x={25} y={224} />
      </svg>
      <Label name="左" />
    </div>
  );
}

function FrontView() {
  return (
    <div className="relative overflow-hidden border-2 border-[#3c3c3c]">
      <svg viewBox="0 0 284 906" preserveAspectRatio="xMidYMid slice" className="absolute inset-0 h-full w-full">
        <defs>
          <pattern id="gridC" width="7.1" height="7.1" patternUnits="userSpaceOnUse" x="142" y="0"><path d="M0 0H7.1M0 0V7.1" stroke="#717171" strokeWidth="2.200" fill="none" /></pattern>
          <linearGradient id="fadeC" x1="0" y1="0" x2="0" y2="1"><stop offset="0" stopColor="#434343" /><stop offset="1" stopColor="#535353" /></linearGradient>
          <linearGradient id="ball" x1="0" y1="0" x2="0" y2="1"><stop offset="0" stopColor="#ae903a" /><stop offset=".4" stopColor="#957a30" /><stop offset=".8" stopColor="#66521f" /><stop offset="1" stopColor="#3a2e10" /></linearGradient>
        </defs>
        <rect width="284" height="906" fill="#dcdcdc" />
        <path d="M0 0H284V39L258 62L230 81L182 100L130 112L74 114L22 107L0 100z" />
        <path d="M0 0H284V36C230 68 190 82 138 82C80 82 40 74 0 57z" fill="url(#ball)" />
        <rect y="331" width="284" height="122" fill="#6e6e6e" />
        <rect y="453" width="284" height="453" fill="url(#fadeC)" />
        <rect y="453" width="284" height="453" fill="url(#gridC)" />
        <path d="M142 453V906M0 453H284" stroke="#2e2e2e" strokeWidth="2" />
        <path d="M142 0V370" stroke="#e81818" strokeWidth="2" opacity=".8" />
        <path d="M89 0V112" stroke="#c01c10" strokeWidth="1.500" /><path d="M89 112V263" stroke="#ff6a6a" strokeWidth="1.500" />
        <Cube x={229} y={55} t="前" />
        <Axis x={25} y={881} flip />
      </svg>
      <Label name="前" dim="bg-[#9a5228]" />
    </div>
  );
}

// ground plane point: u, v run from -1 to 1
const ground = (u: number, v: number) => {
  const s = (u + v) / 2;
  const w = 1 - 0.339 * s;
  return `${(142 + (136 * (u - v)) / 2 / w).toFixed(1)} ${(125 + (68.3 * s) / w).toFixed(1)}`;
};

function PerspectiveView() {
  const steps = Array.from({ length: 15 }, (_, i) => (i - 7) / 7);
  return (
    <div className="relative overflow-hidden border-2 border-[#3c3c3c]">
      <svg viewBox="0 0 284 250" preserveAspectRatio="xMidYMid slice" className="absolute inset-0 h-full w-full">
        <defs><Fade id="fadeD" to="#515151" /></defs>
        <rect width="284" height="250" fill="url(#fadeD)" />
        <path d={steps.map((k) => `M${ground(k, -1)}L${ground(k, 1)}M${ground(-1, k)}L${ground(1, k)}`).join("")} stroke="#6c6c6c" strokeWidth="1.300" />
        <path d={`M${ground(0, -1)}L${ground(0, 1)}M${ground(-1, 0)}L${ground(1, 0)}`} stroke="#000" strokeWidth="1.500" />
        <ellipse cx="229" cy="71" rx="32" ry="18" fill="#3e3e3e" stroke="#84888e" strokeWidth="6" />
        <path d="M229 34L249 42V64L229 76L210 64V42z" fill="#8c8c8c" />
        <path d="M229 34L249 42L229 53L210 42z" fill="#9b9b9b" />
        <path d="M229 53V76M229 53L249 42M229 53L210 42" stroke="#777" strokeDasharray="3 2" fill="none" />
        <text x="213" y="66" fontSize="12" fill="#555">左</text><text x="233" y="65" fontSize="12" fill="#555">前</text>
        <g fontSize="16" fontFamily="DejaVu Sans">
          <path d="M25 224V203" stroke="#1010c8" strokeWidth="2" /><path d="M25 224L45 215" stroke="#c81010" strokeWidth="2" /><path d="M25 224L13 218" stroke="#10a010" strokeWidth="2" />
          <text x="25" y="203" fill="#1010e0">z</text><text x="43" y="217" fill="#d01010">x</text><text x="7" y="216" fill="#10a010">y</text>
        </g>
      </svg>
      <Label name="透视" />
    </div>
  );
}

/* ---- command panel ---- */

function Rollout({ title, children }: { title: string; children: React.ReactNode }) {
  return (
    <div className="mb-[6px] rounded-[3px] border border-[#4a4a4a] bg-[#595959] px-[7px] pb-[7px]">
      <button className="flex h-[26px] w-full items-center text-[18px] font-bold text-[#f0f0f0]">
        <svg viewBox="0 0 10 8" className="mr-[11px] h-2 w-[10px]"><path d="M0 0H10L5 8z" fill="#ddd" /></svg>
        {title}
        <span className="mr-[3px] ml-auto h-[10px] w-[10px] bg-[repeating-linear-gradient(90deg,#8a8a8a_0_1px,transparent_1px_2px)]" />
      </button>
      {children}
    </div>
  );
}

function CommandPanel() {
  const tabs: [string, React.ReactNode][] = [
    ["创建", <path d="M15 3H21V15H33V21H21V33H15V21H3V15H15z" fill="#f0f0f0" />],
    ["修改", <g fill="none" stroke="#4a9696" strokeWidth="2"><path d="M5 9V27M31 9V27M9 5H27M9 31H27M2 2H8V8H2zM28 2H34V8H28zM2 28H8V34H2zM28 28H34V34H28z" /><path d="M10 28C11 16 16 11 28 9" stroke="#aaa" strokeWidth="3" /></g>],
    ["层次", <><path d="M7 2H29V13H7z" fill="#a4a4a4" /><path d="M18 13V20M6 28V21H30V28" fill="none" stroke="#4a9696" strokeWidth="2" /><path d="M3 27H10V34H3zM26 27H33V34H26z" fill="#4a9696" /></>],
    ["运动", <><circle cx="11" cy="18" r="12" fill="none" stroke="#4a9696" strokeWidth="2" /><circle cx="16" cy="18" r="12" fill="none" stroke="#4a9696" strokeWidth="2" /><circle cx="23" cy="18" r="13" fill="#a4a4a4" stroke="#444" /></>],
    ["显示", <path d="M1 3H35V24H1zM15 26H21V29H26V32H10V29H15z" fill="#a4a4a4" />],
    ["实用程序", <path d="M2 8L8 13L12 10L10 2C16 0 20 6 18 11L34 28C36 33 31 36 28 33L12 16C7 18 1 14 2 8z" fill="#a4a4a4" />],
  ];
  const kinds: [string, React.ReactNode][] = [
    ["几何体", <circle cx="18" cy="18" r="15" />],
    ["图形", <Shapes />],
    ["灯光", <Bulb />],
    ["摄影机", <Camera />],
    ["辅助对象", <Ruler />],
    ["空间扭曲", <Waves />],
    ["系统", <><Gear x={11} y={10} s={0.9} fill={L} /><Gear x={24} y={25} s={1.1} fill={L} /></>],
  ];
  return (
    <aside className="flex w-[293px] shrink-0 flex-col pt-[11px] pl-[6px]">
      <GripH className="ml-[3px] w-[282px]" />
      <div className="mt-1 flex h-[42px] divide-x divide-[#3a3a3a] overflow-hidden">
        {tabs.map(([name, art], i) => (
          <button key={name} aria-label={name} className={clsx("flex w-12 shrink-0 items-center justify-center", i && "bg-[#444]")}><Ico className="h-[26px] w-[26px]">{art}</Ico></button>
        ))}
      </div>
      <div className="flex min-h-0 flex-1 flex-col pr-[3px] pl-1">
        <div className="mt-[7px] flex h-[31px] items-center bg-[#6d6d6d] pr-[10px] pl-2">
          <input aria-label="搜索" placeholder="搜索所有对象..." className="min-w-0 flex-1 bg-transparent text-[18px] text-white outline-none placeholder:text-[#b4b4b4]" />
          <Ico box="0 0 20 20" className="h-5 w-5"><circle cx="8" cy="8" r="6.500" fill="none" stroke={L} strokeWidth="2" /><path d="M13 13L19 19" stroke={L} strokeWidth="2.500" /></Ico>
        </div>
        <div className="mt-[7px] flex gap-[2px]">
          {kinds.map(([name, art], i) => (
            <button key={name} aria-label={name} className={clsx("flex h-[34px] w-[34px] items-center justify-center rounded-[5px]", !i && "bg-[#6897d3]")}><Ico className="h-[22px] w-[22px]">{art}</Ico></button>
          ))}
        </div>
        <Combo label="类别" value="标准基本体" className="mt-2 mb-2 h-[31px] w-full" />
        <div className="flex min-h-0 flex-1 gap-1">
          <div className="min-w-0 flex-1">
            <Rollout title="对象类型">
              <label className="mt-2 mb-[10px] ml-3 flex h-[24px] items-center justify-center gap-2 text-[18px] text-[#8c8c8c]">
                <input type="checkbox" disabled className="h-5 w-5 appearance-none border border-[#4e4e4e] bg-[#606060]" />
                自动栅格
              </label>
              <div className="grid grid-cols-2 gap-[7px]">
                {PRIMITIVES.map((p) => <button key={p} className="h-[30px] rounded-[4px] bg-[#6d6d6d] text-[18px] leading-[30px] text-[#d8d8d8] shadow-[0_0_1px_1px_#525252]">{p}</button>)}
              </div>
            </Rollout>
            <Rollout title="名称和颜色">
              <div className="mt-[6px] flex gap-[7px]">
                <input aria-label="对象名称" className="h-[30px] min-w-0 flex-1 border border-[#505050] bg-[#616161] px-2 text-[16px] text-white outline-none" />
                <button aria-label="颜色" className="h-[30px] w-[30px] shrink-0 border border-black bg-[#ae5289]" />
              </div>
            </Rollout>
          </div>
          <div className="w-[10px] shrink-0 rounded-t-[5px] bg-[#444]" />
        </div>
      </div>
    </aside>
  );
}

/* ---- time line ---- */

function Timeline() {
  return (
    <div className="flex h-[93px] shrink-0">
      <GripV className="mt-[9px] mr-[5px] ml-[3px] h-[82px]" />
      <div className="min-w-0 flex-1">
        <div className="flex h-[39px] items-start gap-[2px] pt-[7px] text-[18px] text-[#d8d8d8]">
          <button aria-label="上一帧" className="flex h-[25px] w-[22px] items-center justify-center rounded-[5px] bg-[#6d6d6d]"><Ico box="0 0 8 14" className="h-[13px] w-2"><path d="M7 1L1 7L7 13" fill="none" stroke="#ccc" strokeWidth="1.500" /></Ico></button>
          <button className="h-[25px] w-[185px] rounded-[5px] bg-[#6d6d6d] leading-[25px]"><Txt>0 / 100</Txt></button>
          <button aria-label="下一帧" className="flex h-[25px] w-[22px] items-center justify-center rounded-[5px] bg-[#6d6d6d]"><Ico box="0 0 8 14" className="h-[13px] w-2"><path d="M1 1L7 7L1 13" fill="none" stroke="#ccc" strokeWidth="1.500" /></Ico></button>
        </div>
        <div className="flex h-[54px]">
          <button aria-label="迷你曲线编辑器" className="flex w-[75px] shrink-0 justify-center border-t border-[#222] pt-[10px] pr-[13px]">
            <Ico box="0 0 24 18" className="h-[18px] w-6"><path d="M0 1H5V3H0zM0 4H5V6H0zM0 7H5V9H0zM0 10H5V12H0zM0 13H5V15H0z" /><path d="M8 10C11 -2 14 -2 16 9S21 18 23 8" fill="none" stroke={C} strokeWidth="1.500" /></Ico>
          </button>
          <div className="min-w-0 flex-1 border-t border-[#222] bg-[#373737]">
            <div className="relative flex h-[37px] border-b border-[#444] pr-[10px] pl-2 text-[#c6c6c6]">
              {Array.from({ length: 101 }, (_, i) => (
                <div key={i} className={clsx("relative border-l border-[#7a7a7a]", i < 100 ? "flex-1" : "w-0", i % 5 ? "h-4" : "h-9")}>
                  {i === 0 && <span className="absolute top-px -left-[6px] h-[34px] w-[11px] bg-[#918821]" />}
                  {i % 5 === 0 && <span className="absolute top-[14px] left-0 -translate-x-1/2 font-['Liberation_Serif',serif] text-[18px] leading-[22px]">{i}</span>}
                </div>
              ))}
            </div>
          </div>
          <div className="w-[75px] shrink-0" />
        </div>
      </div>
    </div>
  );
}

/* ---- status bar ---- */

const Coord = ({ axis, value }: { axis: string; value: string }) => (
  <label className="flex items-center gap-[5px] text-[#dedede]">
    <Txt>{axis + ":"}</Txt>
    <input defaultValue={value} className="mr-[18px] h-[26px] w-[87px] border border-[#555] bg-[#646464] px-[2px] font-['Liberation_Mono',monospace] text-[15px] text-[#999] outline-none" />
  </label>
);
const Small = ({ label, fly, w = "w-[34px]", children }: { label: string; fly?: boolean; w?: string; children: React.ReactNode }) => (
  <button aria-label={label} className={clsx("relative flex h-[33px] shrink-0 items-center justify-center", w)}>{children}{fly && <Fly />}</button>
);
const grey = "rounded-[5px] bg-[#6d6d6d] text-[18px] text-[#d8d8d8]";

function StatusBar() {
  return (
    <div className="flex h-[82px] shrink-0 overflow-hidden pl-1 text-[#dedede]">
      <div className="mt-[6px] flex w-[149px] shrink-0 flex-col gap-[2px]">
        <input aria-label="宏录制器" className="h-[35px] border-2 border-[#d0d0d0] border-t-[#808080] bg-[#e2cac9] outline-none" />
        <input aria-label="MAXScript 侦听器" defaultValue={'"xrender-plugin-loaded"'} className="h-[35px] border-2 border-[#e6e6e6] border-t-[#808080] bg-[#e0e0e0] pr-1 pb-2 pl-1 font-['Liberation_Mono',monospace] text-[15px] text-[#0a0ae6] outline-none" />
      </div>
      <div className="mt-1 ml-[2px] h-[75px] w-[7px] shrink-0 border-r border-[#111] bg-[#3c3c3c]" />
      <div className="ml-[5px] flex flex-col gap-3 pt-[14px] leading-6"><Txt>未选定任何对象</Txt><Txt>单击或单击并拖动以选择对象</Txt></div>

      <div className="ml-auto flex w-[665px] shrink-0 flex-col pt-[9px]">
        <div className="flex h-8 items-center">
          <Small label="孤立" fly w="w-[40px]"><Ico className="h-[26px] w-[26px]"><path d="M1 9V2H9M27 2H35V9M35 26V34H27M9 34H1V26M2 30L9 17H27L34 30zM13 9H23V21H13z" fill="none" stroke="#2f2f2f" strokeWidth="2" /></Ico></Small>
          <Small label="锁定" w="w-[40px]"><Ico className="h-[24px] w-[24px]"><path d="M4 15H30V35H4zM9 15V9C9 -1 25 -1 25 9V15" fill="#575757" stroke="#303030" strokeWidth="2.500" /><path d="M15 21H19V31H15z" fill="#303030" /></Ico></Small>
          <Small label="绝对模式" w="w-[40px]"><Ico className="h-[22px] w-[22px]"><path d="M2 2H34V34H2z" fill="none" stroke={L} strokeWidth="3" /><path d="M18 2V11M18 25V34M2 18H11M25 18H34" stroke={L} strokeWidth="3" /><circle cx="18" cy="18" r="6" fill="none" stroke={L} strokeWidth="3" /><path d="M7 7L12 12M29 7L24 12M7 29L12 24M29 29L24 24" stroke={L} strokeWidth="2" /></Ico></Small>
          <div className="ml-[3px] flex"><Coord axis="X" value="0.0mm" /><Coord axis="Y" value="17095.348mm" /><Coord axis="Z" value="11736.45mm" /></div>
          <span className="leading-6"><Txt>栅格 = 1000.0mm</Txt></span>
        </div>
        <div className="mt-[6px] flex h-[30px] items-center pl-[294px]">
          <div className="h-6 w-px bg-[#222]" />
          <button aria-label="安全" className={clsx("ml-2 flex h-[30px] w-[30px] items-center justify-center", grey)}><Ico className="h-[22px] w-[22px]"><path d="M18 1C22 5 28 6 33 6C34 20 30 30 18 35C6 30 2 20 3 6C8 6 14 5 18 1z" /><path d="M18 5C21 8 26 9 30 9C31 12 31 15 30 18H18zM18 18V32C10 28 7 24 6 18z" fill="#555" /></Ico></button>
          <span className="ml-2 leading-6"><Txt>启用:</Txt></span>
          <span className="ml-2 h-[13px] w-[13px] rounded-full bg-[#5bf04c]" />
          <button className={clsx("ml-2 flex h-[30px] w-[30px] items-center justify-center", grey)}><span className="h-[22px] w-[22px] rounded-full bg-[#e4e4e4] font-['Liberation_Sans',sans-serif] text-[16px] leading-[22px] font-bold text-[#444]">0</span></button>
          <div className="ml-2 h-6 w-px bg-[#222]" />
          <Ico className="mr-[18px] ml-[13px] h-[20px] w-[20px]"><path d="M18 2L33 10V26L18 34L3 26V10zM3 10L18 18L33 10M18 18V34" fill="none" stroke={L} strokeWidth="2" /></Ico>
          <button className="leading-6"><Txt>添加⋯标记</Txt></button>
        </div>
      </div>

      <div className="ml-[6px] flex w-[182px] shrink-0 flex-col pt-[7px]">
        <div className="flex items-center">
          <Small label="转至开头"><Ico className="h-[22px] w-[24px]"><path d="M1 5H5V31H1zM18 6V30L6 18zM33 6V30L20 18z" /></Ico></Small>
          <div className="h-6 w-px bg-[#222]" />
          <Small label="上一帧" w="w-[38px]"><Ico className="h-[22px] w-[22px]"><path d="M15 6V30L0 18zM18 5H24V31H18zM28 5H34V31H28z" /></Ico></Small>
          <Small label="播放" fly w="w-[30px]"><Ico className="h-[24px] w-[24px]"><path d="M3 1L34 18L3 35z" /></Ico></Small>
          <Small label="下一帧" w="w-[37px]"><Ico className="h-[22px] w-[22px]"><path d="M2 5H8V31H2zM12 5H18V31H12zM21 6V30L36 18z" /></Ico></Small>
          <div className="h-6 w-px bg-[#222]" />
          <Small label="转至结尾" w="w-[38px]"><Ico className="h-[22px] w-[24px]"><path d="M31 5H35V31H31zM18 6V30L30 18zM3 6V30L16 18z" /></Ico></Small>
        </div>
        <div className="flex items-center">
          <Small label="关键点模式" w="w-[37px]"><Ico className="h-[22px] w-[22px]"><path d="M16 7V29L1 18zM20 7V29L35 18z" /></Ico></Small>
          <div className="relative">
            <input aria-label="当前帧" defaultValue="0" className="h-[25px] w-[105px] border-l border-[#333] bg-[#6d6d6d] pl-1 font-['Liberation_Serif',serif] text-[18px] outline-none" />
            <svg viewBox="0 0 8 16" className="absolute top-1 right-[6px] h-4 w-2"><path d="M0 7L4 0L8 7zM0 9H8L4 16z" fill={L} /></svg>
          </div>
          <Small label="时间配置" w="w-[38px]"><Ico className="h-[24px] w-[24px]"><circle cx="14" cy="14" r="12" /><path d="M13 6V15H20" fill="none" stroke={D} strokeWidth="2" /><Gear x={27} y={27} s={0.9} /></Ico></Small>
        </div>
      </div>

      <button aria-label="设置关键点" className={clsx("mt-2 ml-[11px] flex h-[66px] w-[61px] shrink-0 items-center justify-center", grey)}>
        <Ico box="0 0 44 44" className="h-[44px] w-[44px]"><path d="M18 2H26V18H42V26H26V40H18V26H2V18H18z" stroke={D} /><path d="M27 36L42 22M36 27L40 31M39 24L43 27" stroke={C} strokeWidth="3" /><circle cx="28" cy="36" r="4.500" fill="#6d6d6d" stroke={C} strokeWidth="3" /></Ico>
      </button>
      <div className="mt-2 ml-[5px] flex w-[98px] shrink-0 flex-col gap-[2px]">
        <button className={clsx("h-8", grey)}>自动</button>
        <button className={clsx("h-8", grey)}>设置关键点</button>
      </div>
      <div className="mt-2 ml-[5px] w-[168px] shrink-0">
        <Combo label="关键点对象" value="选定对象" className="h-[25px] w-full" />
        <div className="mt-2 flex">
          <Small label="切线类型" fly w="w-[37px]"><Ico className="h-[28px] w-[26px]"><path d="M3 34C11 32 9 8 12 6M33 34C25 32 27 8 24 6" fill="none" stroke={C} strokeWidth="2.500" /><path d="M2 5H34" stroke={L} strokeWidth="1.500" /><path d="M14 1H22V9H14z" /><circle cx="4" cy="5" r="3" /><circle cx="32" cy="5" r="3" /></Ico></Small>
          <button className={clsx("h-8 w-[128px]", grey)}>过滤器...</button>
        </div>
      </div>
      <div className="mt-[7px] mr-[14px] ml-[21px] grid w-[136px] shrink-0 grid-cols-4">
        <Small label="缩放"><Ico className="h-[24px] w-[24px]"><circle cx="22" cy="13" r="10" fill="none" stroke={L} strokeWidth="4" /><path d="M15 21L3 34" stroke={L} strokeWidth="4" /></Ico></Small>
        <Small label="缩放所有视图"><Ico className="h-[24px] w-[24px]"><path d="M10 2H20V12H10zM22 2H33V12H22zM22 14H33V26H22z" fill={C} /><circle cx="15" cy="19" r="6" fill={C} stroke={L} strokeWidth="3" /><path d="M11 25L3 34" stroke={L} strokeWidth="4" /></Ico></Small>
        <Small label="最大化显示" fly><Ico className="h-[24px] w-[24px]"><path d="M2 9V2H9M27 2H34V9M34 27V34H27M9 34H2V27" fill="none" stroke={L} strokeWidth="2.500" /><path d="M18 5L30 11V24L18 31L6 24V11z" fill={C} /><path d="M6 11L18 17L30 11M18 17V31" fill="none" stroke={D} strokeWidth="1.500" /></Ico></Small>
        <Small label="所有视图最大化" fly><Ico className="h-[24px] w-[24px]"><path d="M17 6L25 2L33 6V22L25 27L17 22z" fill={C} /><path d="M17 6L25 10L33 6M25 10V27" fill="none" stroke={D} strokeWidth="1.500" /><path d="M8 17L13 21L8 26L3 21zM15 26L21 30L15 35L9 30z" /></Ico></Small>
        <Small label="缩放区域"><Ico className="h-[26px] w-[26px]"><rect x="3" y="3" width="31" height="28" fill="none" stroke={L} strokeWidth="2.500" strokeDasharray="5 3" /><circle cx="16" cy="19" r="6" fill="#4b4b4b" stroke={C} strokeWidth="3" /><path d="M12 24L3 34" stroke={C} strokeWidth="3.500" /></Ico></Small>
        <Small label="平移" fly><Ico className="h-[24px] w-[24px]"><path d="M10 18V7Q12 4 14 7V3Q16 0 18 3V6Q20 2 22 5V8Q25 5 26 9V20L30 17Q34 17 32 20L26 31V35H13V31L6 19Q6 15 10 18z" /><path d="M14 6V17M18 4V17M22 7V17" stroke="#4b4b4b" strokeWidth="1" /></Ico></Small>
        <Small label="环绕" fly><Ico className="h-[26px] w-[26px]"><circle cx="16" cy="18" r="13" /><path d="M16 5V18H3A13 13 0 0 1 16 5z" fill={C} /><ellipse cx="20" cy="17" rx="19" ry="7" transform="rotate(-52 20 17)" fill="none" stroke="#4b4b4b" strokeWidth="5" /><ellipse cx="20" cy="17" rx="19" ry="7" transform="rotate(-52 20 17)" fill="none" stroke={L} strokeWidth="2.500" /></Ico></Small>
        <Small label="最大化视口"><Ico className="h-[22px] w-[22px]"><path d="M2 2H34V34H2z" /><path d="M2 20H16V34" fill="none" stroke={D} strokeWidth="2" /><path d="M16 20L29 7M20 6H30V16" fill="none" stroke={D} strokeWidth="3.500" /></Ico></Small>
      </div>
    </div>
  );
}

/* ---- desktop task bar ---- */

// glowing leaves, in loose clusters over the wallpaper
const HUBS = [150, 230, 300, 345, 430, 715, 790, 960, 1160, 1270, 1460, 1560, 1830, 1880, 2090, 2190, 2410];
const EMBERS = Array.from({ length: 170 }, (_, i) => {
  const r = (n: number) => { const v = Math.sin(i * n + 3.7) * 43758.5; return v - Math.floor(v); };
  const x = HUBS[i % HUBS.length] + (r(12.9) - 0.5) * 110;
  return { x, y: r(78.2) * 38, w: 2 + r(4.1) * 4, h: 1 + r(7.3) * 3, a: r(9.7) * 180, c: x > 1700 ? "#ff9a40" : ["#e8622a", "#c44a22", "#8a3a22"][i % 3], o: x > 1700 ? 0.5 : 0.8 };
});

const App36 = ({ label, children }: { label: string; children: React.ReactNode }) => (
  <button aria-label={label} className="mt-[18px] flex w-[66px] shrink-0 justify-center"><Ico>{children}</Ico></button>
);

function Taskbar() {
  return (
    <footer className="relative h-[41px] shrink-0 overflow-hidden bg-[linear-gradient(90deg,#3a3735_0%,#3c3836_28%,#46302f_48%,#5c3230_60%,#a33a2c_72%,#d84a34_76%,#fb5a40_80%,#d14a36_84%,#a83e30_93%,#6e3a30_96%,#4e3a34_100%)]">
      <svg viewBox="0 0 2559 41" preserveAspectRatio="none" className="absolute inset-0 h-full w-full">
        {EMBERS.map((e, i) => <ellipse key={i} rx={e.w} ry={e.h} fill={e.c} opacity={e.o} transform={`translate(${e.x.toFixed(0)} ${e.y.toFixed(0)}) rotate(${e.a.toFixed(0)})`} />)}
      </svg>
      <div className="relative flex h-14 items-start">
        <div className="w-[28.6%] shrink-0" />
        <button aria-label="开始" className="mt-[19px]"><Ico><path d="M0 0H17V17H0zM19 0H36V17H19zM0 19H17V36H0zM19 19H36V36H19z" fill="#55cdfa" /></Ico></button>
        <div className="mt-3 ml-[18px] flex h-[46px] w-[330px] shrink-0 items-start rounded-full border-t-2 border-[#7c7776] bg-[#575251] pt-2 pl-[18px]">
          <Ico box="0 0 20 20" className="mt-1 h-5 w-5"><circle cx="10" cy="10" r="8" fill="#777" stroke="#e8e8e8" strokeWidth="3" /></Ico>
          <input aria-label="搜索" placeholder="搜索" className="ml-[17px] h-7 w-[204px] bg-transparent text-[20px] outline-none placeholder:text-[#e4e4e4]" />
          <Ico box="0 0 64 36" className="-mt-[4px] h-9 w-16"><path d="M12 4L30 20L44 30M30 20L34 30" stroke="#b08060" strokeWidth="2" fill="none" />{[[5, 6, 5], [22, 5, 4], [8, 17, 5], [34, 12, 5], [46, 14, 5], [46, 24, 7], [17, 25, 4], [60, 19, 3], [57, 10, 2]].map(([x, y, r]) => <ellipse key={x + "-" + y} cx={x} cy={y} rx={r} ry={r + 1} fill="#e2cf52" />)}</Ico>
        </div>
        <div className="ml-[3px] flex shrink-0">
          <App36 label="任务视图"><path d="M0 9H22V36H0z" fill="#777" /><path d="M9 0H36V36H9z" fill="#dcdcdc" /></App36>
          <App36 label="PowerPoint"><circle cx="20" cy="18" r="17" fill="#f0704a" /><path d="M20 1A17 17 0 0 1 37 18H20z" fill="#ffa184" /><rect y="8" width="19" height="22" rx="2" fill="#c8401f" /><text x="4" y="25" fontSize="17" fontWeight="bold" fill="#fff" fontFamily="Liberation Sans">P</text></App36>
          <App36 label="文件资源管理器"><path d="M0 3Q0 1 2 1H12L16 6H0z" fill="#f0a800" /><path d="M0 6H36V36H0z" fill="#ffd253" /></App36>
          <App36 label="游戏"><rect width="36" height="36" rx="7" fill="#262b33" /><path d="M5 5Q15 9 18 20Q21 9 31 5Q27 12 22 18V34L18 28L14 34V18Q9 12 5 5z" fill="#c8c8c8" /></App36>
          <App36 label="应用商店"><path d="M10 6V1H26V6" fill="none" stroke="#35b8f0" strokeWidth="3" /><rect y="5" width="36" height="31" rx="2" fill="#e6e6e6" /><path d="M10 13H17V20H10z" fill="#f25022" /><path d="M19 13H26V20H19z" fill="#7fba00" /><path d="M10 22H17V29H10z" fill="#00a4ef" /><path d="M19 22H26V29H19z" fill="#ffb900" /></App36>
          <App36 label="音乐"><rect width="36" height="36" rx="7" fill="#f0ead8" /><path d="M6 20Q12 12 18 18Q26 12 31 20V36H8z" fill="#f4c84a" /><path d="M8 12V6L18 3V9" fill="none" stroke="#40b4e4" strokeWidth="2.500" /><path d="M18 24L26 20V32z" fill="#f08030" /></App36>
          <App36 label="7-Zip"><path d="M2 5H34V36H2z" fill="#fff" stroke="#000" strokeWidth="3" /><path d="M6 10H20V36H6z" fill="#000" /><text x="7" y="30" fontSize="22" fontWeight="bold" fill="#fff" fontFamily="Liberation Sans">7</text><text x="21" y="31" fontSize="18" fontWeight="bold" fill="#000" fontFamily="Liberation Sans">z</text></App36>
          <App36 label="WinRAR"><path d="M0 3H36V13H0z" fill="#c8284a" /><path d="M0 14H36V24H0z" fill="#4a4ac0" /><path d="M0 25H36V36H0z" fill="#3a9a4a" /><path d="M13 2H23V36H13z" fill="#e0aa38" /><path d="M15 14H21V24H15z" fill="#704a10" /></App36>
          <App36 label="Edge"><circle cx="18" cy="18" r="18" fill="#1e88d8" /><path d="M1 14C5 -5 34 -3 36 16C36 24 26 26 22 22C26 12 12 6 1 14z" fill="#4cd8a0" /><path d="M5 26C4 12 20 10 22 20C16 18 14 30 24 34Q10 38 5 26z" fill="#0f58a8" /></App36>
          <App36 label="游戏启动器"><rect width="36" height="36" rx="7" fill="#22303e" /><path d="M0 14L20 0H7Q0 0 0 7z" fill="#3424c0" /><path d="M2 16L18 3" stroke="#c8e830" strokeWidth="3" /><path d="M15 14Q22 4 30 12V26L26 33H19L15 26z" fill="#c0a890" /><path d="M14 14Q20 2 31 11L30 15H16z" fill="#888" /></App36>
          <button aria-label="3ds Max" className="mt-[6px] ml-[5px] flex h-[50px] w-[56px] justify-center rounded-[6px] border border-white/15 bg-white/10 pt-[11px]"><Ico><path d="M4 0H33Q36 0 36 3V36H0V5z" fill="#3fb6e0" /><path d="M0 5L4 0V36H0z" fill="#2a86b0" /><text x="13" y="24" fontSize="22" fontWeight="bold" fill="#fff" fontFamily="Liberation Sans">3</text></Ico></button>
        </div>
        <div className="mr-[30px] ml-auto flex text-[24px] text-[#eee]">
          <Ico box="0 0 18 12" className="mt-[30px] mr-[27px] h-3 w-[18px]"><path d="M1 11L9 2L17 11" fill="none" stroke="#eee" strokeWidth="2" /></Ico>
          <button className="mt-[17px] mr-[34px] leading-8">中</button>
          <button className="mt-[17px] mr-[33px] leading-8">拼</button>
          <Ico box="0 0 26 26" className="mt-6 mr-[10px] h-[26px] w-[26px]"><g fill="none" stroke="#eee" strokeWidth="2.500"><path d="M2 10C8 2 18 2 24 10M6 14C10 9 16 9 20 14M10 18C12 16 14 16 16 18" /></g></Ico>
          <Ico box="0 0 26 26" className="mt-6 mr-[10px] h-[26px] w-[26px]"><path d="M2 8H6L12 3V22L6 17H2z" fill="none" stroke="#eee" strokeWidth="2" /><path d="M16 8Q19 12 16 17M20 5Q25 12 20 20" fill="none" stroke="#eee" strokeWidth="2" /></Ico>
          <Ico box="0 0 26 26" className="mt-[23px] mr-[54px] h-[26px] w-[26px]"><path d="M6 5H22V9H25V16H22V26H2V10" fill="#ddd" stroke="#eee" strokeWidth="2" /><path d="M5 0L0 8H4L2 14L9 5H5z" /></Ico>
          <time className="mt-[11px] mr-[10px] font-['Open_Sans',sans-serif] text-[17px] leading-6">23:14</time>
          <Ico box="0 0 24 24" className="mt-[22px] h-6 w-6"><path d="M4 24V12Q4 3 12 3H14V14H20V24z" fill="#e8e8e8" /><path d="M13 2H21L14 10H21" fill="none" stroke="#fff" strokeWidth="2" /><path d="M8 10H14L9 18H15" fill="none" stroke="#444" strokeWidth="2" /></Ico>
        </div>
      </div>
    </footer>
  );
}

export default function App() {
  return (
    <main className="flex min-h-screen flex-col overflow-hidden bg-[#4b4b4b] font-['Liberation_Sans','Noto_Sans_CJK_SC',sans-serif]">
      <MenuBar />
      <MainToolbar />
      <div className="flex flex-1">
        <LeftBar />
        <div className="flex min-w-0 flex-1 flex-col">
          <Ribbon />
          <div className="flex flex-1">
            <Dock />
            <Explorer />
            <div className="grid min-w-0 flex-1 grid-cols-[minmax(0,1fr)_288px] grid-rows-[minmax(0,1fr)_254px] gap-1 pt-2">
              <LeftView />
              <FrontView />
              <LeftViewSmall />
              <PerspectiveView />
            </div>
            <CommandPanel />
          </div>
          <Timeline />
        </div>
      </div>
      <StatusBar />
      <Taskbar />
    </main>
  );
}
